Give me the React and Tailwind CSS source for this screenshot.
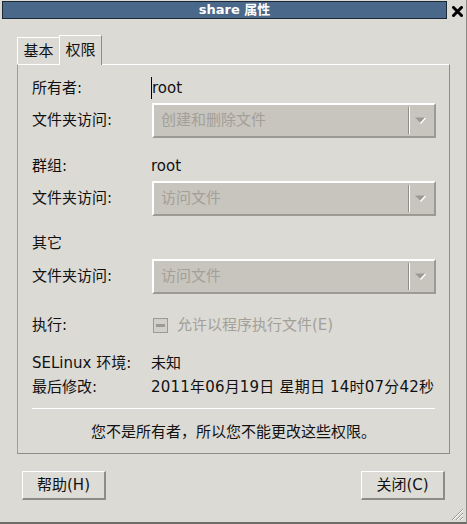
import React from "react";

const Combo = ({ text }) => (
  <div className="flex h-[35px] w-[284px] items-center border-2 border-t-white border-l-white border-r-[#9d9a94] border-b-[#9d9a94] bg-[#c8c5be]">
    <span className="flex-1 pl-[7px] text-[#a3a099]">{text}</span>
    <div className="h-[27px] w-[2px] border-l border-l-[#8e8c87] border-r border-r-white" />
    <div className="flex w-[24px] items-center justify-center pr-[3px]">
      <svg width="11" height="7" viewBox="0 0 11 7">
        <polygon points="0,0.5 10,0.5 5,5.5" fill="#9b9892" />
        <line x1="10.5" y1="1" x2="5.5" y2="6.5" stroke="#ffffff" strokeWidth="1.2" />
      </svg>
    </div>
  </div>
);

const Row = ({ label, labelWidth = "w-[119px]", className = "", children }) => (
  <div className={`flex h-[24px] items-center ${className}`}>
    <span className={`shrink-0 ${labelWidth}`}>{label}</span>
    {children}
  </div>
);

const ComboRow = ({ text, className = "" }) => (
  <div className={`flex items-center ${className}`}>
    <span className="w-[120px] shrink-0">文件夹访问:</span>
    <Combo text={text} />
  </div>
);

const Button = ({ children }) => (
  <button className="flex h-[29px] w-[84px] items-center justify-center border-t border-l border-t-white border-l-white border-r-2 border-b-2 border-r-[#8e8c87] border-b-[#8e8c87] bg-[#dedcd7]">
    {children}
  </button>
);

export default function App() {
  return (
    <div className="relative flex h-[524px] w-[467px] flex-col overflow-hidden border-r border-b-2 border-r-[#8c8a85] border-b-[#6f6d69] bg-[#dcdad5] font-['DejaVu_Sans','Noto_Sans_CJK_SC',sans-serif] text-[15px] text-[#111]">
      {/* title bar */}
      <div className="flex h-[20px] items-start">
        <div className="mt-[1px] ml-[2px] flex h-[18px] w-[445px] items-center justify-center border border-[#1d2836] bg-[#4a6889] pl-[20px] text-[13px] font-bold text-white">
          share 属性
        </div>
        <svg className="mt-[6px] ml-[5px]" width="11" height="11" viewBox="0 0 11 11">
          <path d="M1.5 1.5 L9.5 9.5 M9.5 1.5 L1.5 9.5" stroke="#000" strokeWidth="3" strokeLinecap="square" />
        </svg>
      </div>

      {/* tabs */}
      <div className="mt-[15px] ml-[17px] flex h-[30px] items-end">
        <div className="flex h-[28px] w-[42px] items-center justify-center border-t border-l border-white">
          基本
        </div>
        <div className="relative z-10 flex h-[30px] w-[43px] items-center justify-center border-t border-l border-r border-t-white border-l-white border-r-[#8e8c87] bg-[#dcdad5] pb-[1px]">
          权限
        </div>
      </div>

      {/* frame */}
      <div className="-mt-px ml-[17px] flex h-[390px] w-[433px] flex-col border border-t-white border-l-[#a09e98] border-r-[#8e8c87] border-b-[#8e8c87] pl-[14px]">
        <Row label="所有者:" className="mt-[11px]">
          <span className="border-l border-black">root</span>
        </Row>
        <ComboRow text="创建和删除文件" className="mt-[3px]" />

        <Row label="群组:" className="mt-[16px]">
          <span>root</span>
        </Row>
        <ComboRow text="访问文件" className="mt-[3px]" />

        <Row label="其它" className="mt-[15px]" />
        <ComboRow text="访问文件" className="mt-[4px]" />

        <Row label="执行:" labelWidth="w-[121px]" className="mt-[19px]">
          <div className="flex h-[15px] w-[15px] items-center justify-center border border-[#9c9a95] bg-[#d2cfc9]">
            <div className="h-[3px] w-[9px] bg-[#9c9a95]" />
          </div>
          <span className="ml-[9px] text-[#a3a099]">允许以程序执行文件(E)</span>
        </Row>

        <Row label="SELinux 环境:" className="mt-[14px]">
          <span>未知</span>
        </Row>
        <Row label="最后修改:">
          <span className="whitespace-nowrap tracking-[0.2px]">2011年06月19日 星期日 14时07分42秒</span>
        </Row>

        <div className="mt-[9px] h-px w-[403px] bg-white" />
        <div className="mt-[11px] flex h-[24px] w-[403px] items-center justify-center">
          您不是所有者，所以您不能更改这些权限。
        </div>
      </div>

      {/* buttons */}
      <div className="mt-[17px] ml-[22px] flex w-[423px] justify-between">
        <Button>帮助(H)</Button>
        <Button>关闭(C)</Button>
      </div>

      {/* resize grip */}
      <svg className="absolute right-[2px] bottom-[1px]" width="14" height="14" viewBox="0 0 14 14">
        <path d="M13 2 L2 13 M13 6 L6 13 M13 10 L10 13" stroke="#9c9a95" strokeWidth="1" />
        <path d="M13 3 L3 13 M13 7 L7 13 M13 11 L11 13" stroke="#ffffff" strokeWidth="1" />
      </svg>
    </div>
  );
}
